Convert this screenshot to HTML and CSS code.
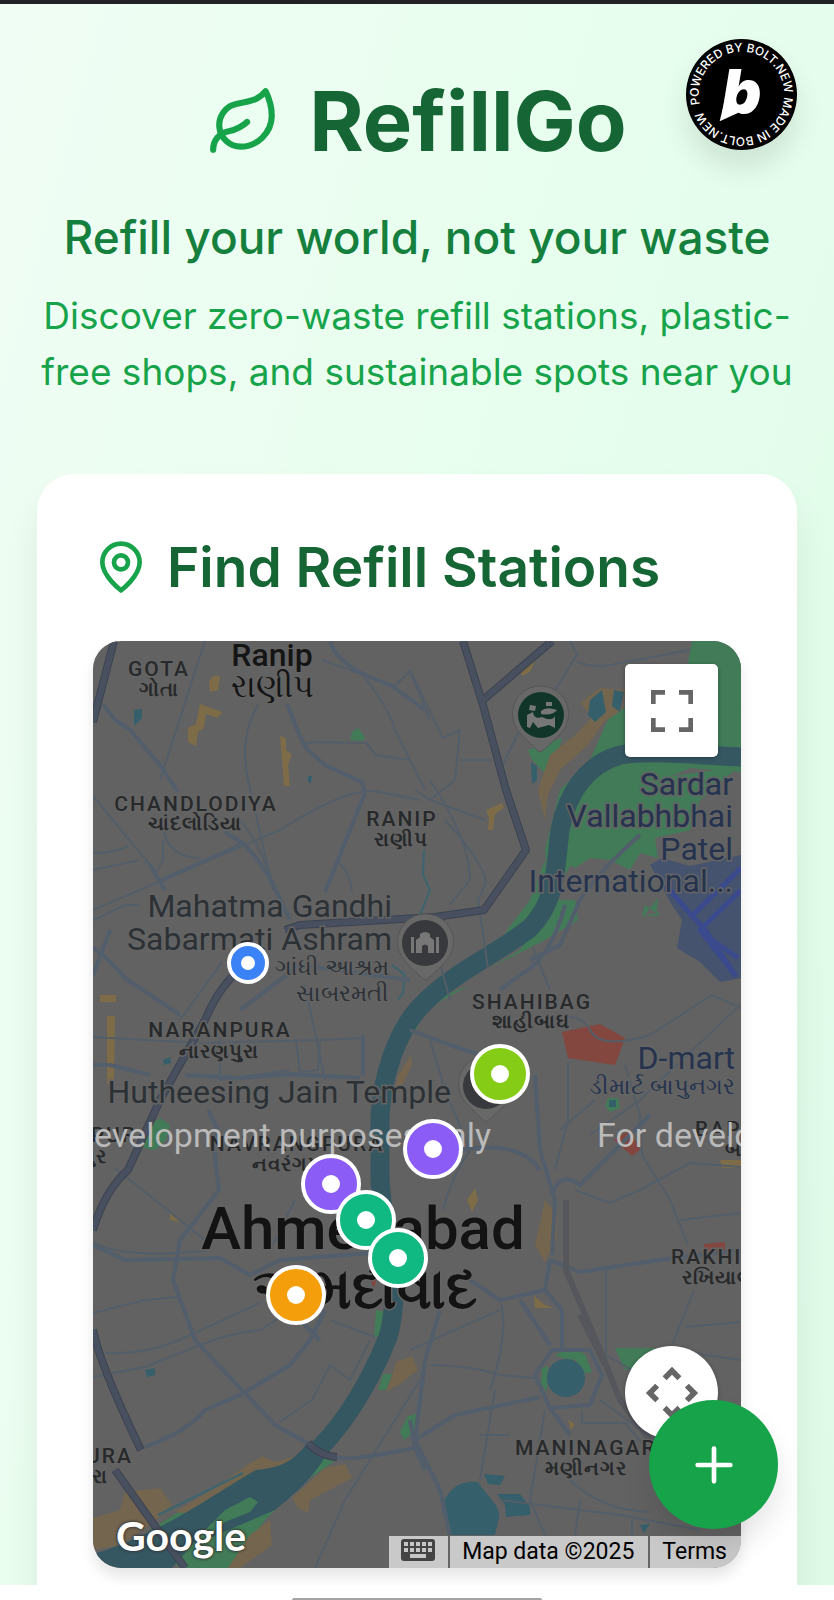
FILE: index.html
```
<!DOCTYPE html>
<html lang="en">
<head>
    <meta charset="UTF-8">
    <meta name="viewport" content="width=device-width, initial-scale=1.0">
    <title>RefillGo</title>
    <link rel="stylesheet" href="styles.css">
</head>
<body>

<div class="screen">
    <header class="header">
        <div class="brand">
            <svg class="brand-icon" viewBox="0 0 24 24" aria-hidden="true">
                <path d="M11 20A7 7 0 0 1 9.8 6.1C15.5 5 17 4.48 19 2c1 2 2 4.18 2 8 0 5.5-4.78 10-10 10Z"/>
                <path d="M2 21c0-3 1.85-5.36 5.08-6C9.5 14.52 12 13 13 12"/>
            </svg>
            <h1>RefillGo</h1>
        </div>
        <p class="tagline">Refill your world, not your waste</p>
        <p class="description">Discover zero-waste refill stations, plastic-free shops, and sustainable spots near you</p>
    </header>

    <main class="card">
        <div class="card-title">
            <svg class="card-icon" viewBox="0 0 24 24" aria-hidden="true">
                <path d="M20 10c0 6-8 12-8 12s-8-6-8-12a8 8 0 0 1 16 0Z"/>
                <circle cx="12" cy="10" r="3"/>
            </svg>
            <h2>Find Refill Stations</h2>
        </div>

        <div class="map">
            <svg class="map-canvas" viewBox="93 641 648 927" preserveAspectRatio="xMidYMid slice">
                <rect class="land" x="93" y="641" width="648" height="927"/>

                <!-- parks -->
                <g class="park">
                    <path d="M692 641H741V710L720 708 705 700 685 680Z"/>
                    <path d="M741 709V772L690 768 640 790 600 820 575 858 550 900 545 850 560 790 590 760 610 715 640 700Z"/>
                    <path d="M580 790L741 766 730 774 700 800 690 830 655 838 658 858 640 853 630 870 610 860 590 858 575 868 565 862Z"/>
                    <path d="M658 898L643 917 660 912 656 917ZM645 905L660 915 642 917Z"/>
                    <path d="M545 860L530 900 500 940 530 920 550 905ZM575 900L578 920 545 940 490 968 520 950 550 900Z"/>
                    <path d="M470 985L425 1010 415 1032 411 1026 425 1004Z"/>
                    <path d="M528 750L562 738 556 760 544 772 532 760Z"/>
                    <path d="M352 732L358 728 365 737 363 741 350 740Z"/>
                    <path d="M150 1125L160 1118 170 1125 166 1140 155 1150 143 1148Z"/>
                    <path d="M376 1310L385 1312 380 1335 374 1338Z"/>
                    <path d="M383 1374L392 1374 386 1390 378 1390Z"/>
                    <path d="M408 1416L416 1414 414 1432 404 1440 400 1432Z"/>
                    <path d="M615 1348L655 1348 645 1370 625 1370Z"/>
                    <path d="M555 1355L570 1348 585 1354 592 1372 582 1374 576 1360 562 1358ZM542 1368L548 1366 547 1392 541 1384Z"/>
                    <path d="M608 1098L618 1098 620 1108 610 1112 605 1106Z"/>
                    <path d="M150 1530L190 1505 240 1495 300 1470 322 1458 336 1460 300 1485 265 1520 230 1568H180L160 1550Z"/>
                </g>

                <!-- sandy and built up areas -->
                <g class="sand">
                    <path d="M580 703L600 688 625 690 622 710 604 722 588 745 560 770 548 795 545 820 538 790 550 755 575 735 592 717Z"/>
                    <path d="M93 1518L120 1510 125 1492 160 1488 172 1505 150 1525 120 1545 93 1550Z"/>
                    <path d="M247 1465L262 1456 275 1462 300 1455 280 1475 250 1485 200 1515 175 1512 215 1488Z"/>
                    <path d="M325 1468L345 1464 352 1478 310 1500 308 1513 298 1508 292 1498Z"/>
                    <path d="M270 1520L272 1545 240 1568H228L250 1535Z"/>
                    <path d="M396 1362L412 1356 418 1370 400 1384 386 1392 392 1376Z"/>
                    <path d="M545 1200L557 1215 556 1240 545 1262 535 1245Z"/>
                    <path d="M411 1055L398 1075 394 1095 400 1090 412 1065Z"/>
                </g>
                <g class="commercial">
                    <path d="M213 676L220 676 218 690 210 692 209 682Z"/>
                    <path d="M200 704L222 712 218 718 206 714 204 728 198 732 196 746 188 742 188 728 196 724Z"/>
                    <path d="M280 736L286 738 286 750 292 754 288 765 290 786 284 786 282 760Z"/>
                    <path d="M520 668L535 661 530 672 522 676Z"/>
                    <path d="M486 810L502 803 504 808 495 814 493 830 488 830 489 818Z"/>
                    <path d="M107 1016L115 1016 114 1084 107 1084ZM100 995H116V1002H100Z"/>
                    <path d="M534 1296L545 1305 553 1308 535 1308Z"/>
                    <path d="M475 1188L478 1200 472 1212 467 1200Z"/>
                    <path d="M720 1160H741V1168H722Z"/>
                    <path d="M170 1213L180 1222 170 1220ZM568 1420L575 1424 571 1430Z"/>
                </g>

                <path class="airport" d="M650 865L662 858 690 866 741 855V978L720 982 700 962 677 948 682 920 672 905Z"/>
                <path class="runway" d="M665 885L705 930 735 975 700 930 741 890M690 918L741 868M705 935L738 958"/>

                <!-- water -->
                <path class="river" d="M741 757C700 755 650 750 620 755C585 765 567 795 560 830C555 870 557 900 530 928C500 952 450 975 425 1002C395 1030 382 1080 380 1117V1180Q384 1230 394 1260Q396 1310 388 1337C365 1395 335 1435 312 1455"/>
                <path class="river-fill" d="M306 1445C290 1465 275 1468 256 1470C220 1490 160 1535 93 1554V1568H172L205 1530 225 1510 250 1497 258 1502 250 1512 225 1522 205 1540 275 1510C300 1490 315 1475 328 1452Z"/>
                <g class="lake">
                    <circle cx="566" cy="1378" r="19"/>
                    <path d="M442 1510C445 1490 460 1480 478 1482C490 1500 500 1505 499 1518L495 1535H450Z"/>
                    <path d="M484 1474L505 1476 500 1485 488 1484ZM497 1494L520 1494 530 1507 530 1515 506 1517 505 1505Z"/>
                    <path d="M134 710L142 709 142 718 134 726ZM308 776L312 776 311 783 308 782Z"/>
                    <path d="M590 700L602 690 606 712 595 722 588 715ZM614 690L624 692 620 712 612 706Z"/>
                    <path d="M531 762L537 766 537 780 532 784Z"/>
                    <path d="M163 1060L170 1057 171 1063 164 1065ZM145 1370L155 1368 155 1375 147 1377Z"/>
                    <path d="M640 1525L650 1524 644 1533ZM609 1100H616V1107H609Z"/>
                </g>
                <path class="stream" d="M424 850L423 875 430 890 420 915M392 965L405 975 403 993 398 1000M158 1515L243 1473"/>

                <!-- hospital / special zones -->
                <g class="zone">
                    <path d="M562 1032L600 1024 625 1038 615 1065 568 1058Z"/>
                    <path d="M614 1140L630 1130 640 1150 632 1156Z"/>
                    <path d="M704 1244L725 1242 725 1255H704Z"/>
                    <path d="M370 1262L378 1275 374 1288 368 1275Z"/>
                </g>

                <!-- streets -->
                <g class="street thin">
                    <path d="M205 641L160 780M258 705Q240 735 247 775L273 890M93 910L280 830Q350 785 380 792L420 800"/>
                    <path d="M93 796L150 865 166 890M163 830Q170 858 200 858M163 840V860L155 875M235 815Q260 840 275 890"/>
                    <path d="M322 660L395 686 410 671 430 720M365 678Q390 710 395 730L425 790M286 704Q300 740 305 745L310 742 366 743 376 755 410 760"/>
                    <path d="M337 862Q350 870 352 892M93 853Q115 853 128 846M93 870L140 860"/>
                    <path d="M415 790L430 800 455 780 460 730 443 738 410 670M430 780Q470 840 470 880L450 905M430 800L485 820M460 760H492M445 820Q490 870 485 885L478 900 488 968"/>
                    <path d="M570 641L577 655 555 690 520 730 500 770M577 662Q600 670 620 663L690 650"/>
                    <path d="M93 920L125 905 140 905M180 1020L222 962M93 1037L200 1043 320 1040 362 1038M320 1043L318 1070 300 1072 296 1040M220 1038V1080L290 1070M305 985L325 1080"/>
                    <path d="M115 1168L180 1220 205 1240M93 1243Q130 1260 210 1250M93 1313L145 1300 178 1297M105 1353Q150 1355 190 1335L260 1303M93 1377L145 1367 200 1345Q230 1333 260 1330L300 1305"/>
                    <path d="M280 1422L312 1400 330 1365 350 1380 370 1340M315 1568L345 1500 420 1380M330 1320L375 1337M295 1200L270 1250"/>
                    <path d="M545 1020Q580 1010 590 1030T650 1035L712 995 741 1008M740 1005L640 1100 590 1135M568 1062V1120L555 1170M625 1065L640 1115 642 1155 670 1200 688 1245M595 1100L560 1130"/>
                    <path d="M435 945L450 1000M533 948L550 990M430 1040L445 1090 470 1150Q450 1180 443 1210M741 1167L690 1163 640 1190 610 1203 575 1190M680 1220L741 1213"/>
                    <path d="M606 1270V1355L640 1375M694 1290L670 1350 741 1360M685 1327L741 1322M500 1300Q510 1330 490 1390M410 1350L500 1310M430 1365Q470 1365 500 1375L535 1378M495 1390L480 1480"/>
                    <path d="M480 1435H510M545 1410Q540 1440 530 1500L545 1535M582 1410V1423H625L690 1500M500 1500L620 1515 700 1530M570 1480Q600 1510 650 1512M580 1500L575 1535M632 1520V1535M600 1400L655 1440"/>
                </g>
                <g class="street">
                    <path d="M103 704L115 720 130 730 160 765 178 792M225 832L245 845Q268 870 278 895L290 920"/>
                    <path d="M330 641Q335 660 365 675L392 686 425 710M288 705Q300 740 308 750L325 765 362 782 365 793 338 860 325 892"/>
                    <path d="M162 880L240 845M150 865L165 890M93 948Q105 955 125 978L180 1015M93 975L110 930"/>
                    <path d="M93 1065H110L150 1075M185 1075L240 1078 290 1074 360 1078M363 1035V1075M240 1010L300 965 410 980M208 1110L218 1130 214 1150 219 1190 180 1240 173 1280 195 1340 240 1388 275 1425 320 1450"/>
                    <path d="M145 1447Q190 1430 205 1410L240 1395 290 1365 310 1340 325 1310M93 1245L125 1260 220 1258 250 1275 280 1260 410 1250M290 1310L320 1340"/>
                    <path d="M337 1457Q345 1462 415 1448L425 1470M415 1448L410 1420"/>
                    <path d="M565 905Q550 960 520 975L500 990M640 835Q600 870 580 900L560 945 530 960M410 1030L450 1045 490 1058M535 1075L540 1150 555 1200 552 1255M460 1150Q520 1140 540 1170M650 1115L580 1185Q560 1170 552 1195"/>
                    <path d="M550 1260L580 1272 660 1260 741 1250M470 1280L500 1300 545 1290 550 1260M545 1290L562 1310 562 1350M520 1300L550 1345"/>
                    <path d="M440 1310L425 1360 415 1440 440 1490 450 1535M415 1440L455 1415 540 1397M535 1375L552 1350 590 1350 602 1375 590 1405 550 1408ZM550 1408L570 1435"/>
                </g>
                <g class="rail">
                    <path d="M566 1200V1270L600 1350 620 1400 650 1440M580 1315L605 1365"/>
                </g>
                <g class="highway-edge">
                    <path d="M114 641L93 722M463 641L483 705 506 790 526 850 484 910 435 917 300 925 285 930M483 700L552 641M240 970Q220 985 205 1020L160 1100 128 1170Q105 1190 93 1230M93 1330Q100 1365 141 1450M115 1470L185 1568M308 1443Q320 1456 337 1457"/>
                </g>
                <g class="highway">
                    <path d="M114 641L93 722M463 641L483 705 506 790 526 850 484 910 435 917 300 925 285 930M483 700L552 641M240 970Q220 985 205 1020L160 1100 128 1170Q105 1190 93 1230M93 1330Q100 1365 141 1450M115 1470L185 1568M308 1443Q320 1456 337 1457"/>
                </g>

                <!-- places of interest -->
                <g class="poi">
                    <path class="poi-edge" d="M540 752Q536 750 520 733A28 28 0 1 1 561 733Q545 750 540 752Z"/>
                    <circle class="poi-green" cx="541" cy="715" r="23"/>
                    <path class="poi-glyph" d="M530 705L536 706 535 711 529 710ZM546 702H552V706H546ZM527 715L533 712Q534 720 542 717Q552 722 555 716L555 728 549 725 538 728 533 722 530 728 527 727ZM541 711Q546 706 557 710Q552 716 541 714Z"/>
                </g>
                <g class="poi">
                    <path class="poi-edge" d="M425 980Q421 978 405 961A28 28 0 1 1 446 961Q430 978 425 980Z"/>
                    <circle class="poi-grey" cx="425" cy="943" r="23"/>
                    <path class="poi-glyph" d="M411 937H414V953H411ZM416 953V940L420 937V934Q425 930 430 934V937L434 940V953H428V946Q425 943 422 946V953ZM436 937H439V953H436Z"/>
                </g>
                <g class="poi">
                    <path class="poi-edge" d="M486 1122Q482 1120 466 1103A28 28 0 1 1 507 1103Q490 1120 486 1122Z"/>
                    <circle class="poi-grey" cx="486" cy="1086" r="23"/>
                </g>

                <!-- labels -->
                <g class="label city">
                    <text x="272" y="666" text-anchor="middle">Ranip</text>
                    <text class="local" x="272" y="697" text-anchor="middle">રાણીપ</text>
                </g>
                <g class="label district">
                    <text x="159" y="676" text-anchor="middle">GOTA</text>
                    <text x="196" y="811" text-anchor="middle">CHANDLODIYA</text>
                    <text x="402" y="826" text-anchor="middle">RANIP</text>
                    <text x="220" y="1037" text-anchor="middle">NARANPURA</text>
                    <text x="297" y="1151" text-anchor="middle">NAVRANGPURA</text>
                    <text x="532" y="1009" text-anchor="middle">SHAHIBAG</text>
                    <text x="515" y="1455">MANINAGAR</text>
                    <text x="671" y="1264">RAKHIAL</text>
                    <text x="695" y="1136">BAPUNAGAR</text>
                    <text x="133" y="1463" text-anchor="end">VEJALPURA</text>
                    <text x="137" y="1142" text-anchor="end">VASTRAPUR</text>
                </g>
                <g class="label district-local">
                    <text x="159" y="696" text-anchor="middle">ગોતા</text>
                    <text x="195" y="830" text-anchor="middle">ચાંદલોડિયા</text>
                    <text x="401" y="846" text-anchor="middle">રાણીપ</text>
                    <text x="219" y="1058" text-anchor="middle">નારણપુરા</text>
                    <text x="252" y="1171">નવરંગપુરા</text>
                    <text x="531" y="1028" text-anchor="middle">શાહીબાઘ</text>
                    <text x="586" y="1475" text-anchor="middle">મણીનગર</text>
                    <text x="682" y="1284">રખિયાલ</text>
                    <text x="725" y="1156">બાપુનગર</text>
                    <text x="108" y="1483" text-anchor="end">રા</text>
                    <text x="107" y="1163" text-anchor="end">પુર</text>
                </g>
                <g class="label place" text-anchor="end">
                    <text x="392" y="917">Mahatma Gandhi</text>
                    <text x="392" y="950">Sabarmati Ashram</text>
                    <text x="451" y="1103">Hutheesing Jain Temple</text>
                    <text class="place-local" x="389" y="975">ગાંધી આશ્રમ</text>
                    <text class="place-local" x="389" y="1001">સાબરમતી</text>
                </g>
                <g class="label place transit" text-anchor="end">
                    <text x="733" y="795">Sardar</text>
                    <text x="733" y="827">Vallabhbhai</text>
                    <text x="733" y="860">Patel</text>
                    <text x="733" y="892">International...</text>
                    <text x="735" y="1069">D-mart</text>
                    <text class="place-local" x="735" y="1094">ડીમાર્ટ બાપુનગર</text>
                </g>
                <g class="label capital">
                    <text x="363" y="1249" text-anchor="middle">Ahmedabad</text>
                    <text class="local" x="365" y="1308" text-anchor="middle">અમદાવાદ</text>
                </g>
                <g class="watermark">
                    <text x="491" y="1147" text-anchor="end">For development purposes only</text>
                    <text x="597" y="1147">For development purposes only</text>
                </g>
            </svg>

            <button class="pin pin-user" aria-label="Your location"></button>
            <button class="pin pin-lime" aria-label="Refill station"></button>
            <button class="pin pin-purple pin-east" aria-label="Refill station"></button>
            <button class="pin pin-purple pin-west" aria-label="Refill station"></button>
            <button class="pin pin-green pin-upper" aria-label="Refill station"></button>
            <button class="pin pin-green pin-lower" aria-label="Refill station"></button>
            <button class="pin pin-orange" aria-label="Refill station"></button>

            <button class="map-control fullscreen" aria-label="Toggle fullscreen view">
                <svg viewBox="0 0 18 18"><path d="M0 0v6h2V2h4V0H0zm16 0h-4v2h4v4h2V0h-2zm0 16h-4v2h6v-6h-2v4zM2 12H0v6h6v-2H2v-4z"/></svg>
            </button>
            <button class="map-control camera" aria-label="Map camera controls">
                <svg viewBox="0 0 54 54"><path d="M19 11L27 3 35 11M19 43L27 51 35 43M11 19L3 27 11 35M43 19L51 27 43 35"/></svg>
            </button>

            <a class="google" href="#">Google</a>
            <div class="attribution">
                <button aria-label="Keyboard shortcuts">
                    <svg viewBox="0 0 34 22">
                        <rect width="34" height="22" rx="3"/>
                        <path d="M3 5H31M3 11H31" stroke-dasharray="4 2"/>
                        <path d="M9 17H25"/>
                    </svg>
                </button>
                <span>Map data ©2025</span>
                <a href="#">Terms</a>
            </div>
        </div>
    </main>

    <a class="badge" href="#" aria-label="Powered by Bolt.new">
        <svg viewBox="0 0 112 112">
            <defs><path id="ring" d="M14 66A43 43 0 0 1 98 46A43 43 0 0 1 14 66"/></defs>
            <circle cx="56" cy="56" r="56"/>
            <text class="ring-text"><textPath href="#ring">POWERED BY BOLT.NEW MADE IN BOLT.NEW</textPath></text>
            <text class="bolt" x="36" y="76">b</text>
            <path class="bolt-tail" d="M40 58L34 83 54 74 50 62Z"/>
        </svg>
    </a>

    <button class="fab" aria-label="Add station">
        <svg viewBox="0 0 24 24"><path d="M5 12h14M12 5v14"/></svg>
    </button>
</div>

<div class="gesture-bar"><span></span></div>

</body>
</html>
```
FILE: styles.css
```
* {
    box-sizing: border-box;
}
body {
    margin: 0;
    height: 100vh;
    display: flex;
    flex-direction: column;
    font-family: Inter, sans-serif;
    background: #fff;
    border-top: 4px solid #222226;
}
h1, h2, p {
    margin: 0;
}
button {
    border: none;
    padding: 0;
    cursor: pointer;
}
a {
    color: inherit;
    text-decoration: none;
}
svg {
    display: block;
}
.screen {
    position: relative;
    flex: 1;
    min-height: 0;
    overflow: hidden;
    padding: 71px 37px 0;
    display: flex;
    flex-direction: column;
    background: linear-gradient(105deg, #f0fdf4, #e7feee 50%, #dffbe8);
}

/* Header */
.header {
    text-align: center;
    margin-bottom: 74px;
}
.brand {
    display: flex;
    align-items: center;
    justify-content: center;
    gap: 28px;
    margin-bottom: 37px;
}
.brand-icon {
    width: 74px;
    height: 74px;
}
.brand-icon, .card-icon {
    fill: none;
    stroke: #16a34a;
    stroke-width: 2;
    stroke-linecap: round;
    stroke-linejoin: round;
}
h1 {
    font-size: 83px;
    line-height: 93px;
    font-weight: 700;
    color: #166534;
}
.tagline {
    font-size: 46px;
    line-height: 65px;
    font-weight: 500;
    color: #15803d;
    margin-bottom: 18px;
}
.description {
    font-size: 37px;
    line-height: 56px;
    color: #16a34a;
}

/* Map card */
.card {
    flex: 1 0 auto;
    background: #fff;
    border-radius: 37px 37px 0 0;
    padding: 56px;
    box-shadow: 0 24px 36px rgba(0, 0, 0, 0.07);
}
.card-title {
    display: flex;
    align-items: center;
    gap: 18px;
    margin-bottom: 37px;
}
.card-icon {
    width: 56px;
    height: 56px;
}
h2 {
    font-size: 55px;
    line-height: 74px;
    font-weight: 600;
    color: #166534;
}
.map {
    position: relative;
    height: 927px;
    border-radius: 28px;
    overflow: hidden;
    box-shadow: 0 9px 14px rgba(0, 0, 0, 0.1);
    font-family: Roboto, sans-serif;
}
.map-canvas {
    width: 100%;
    height: 100%;
}
.land { fill: #626262; }
.park { fill: #417b58; }
.sand { fill: #74654f; }
.commercial { fill: #7d6c47; }
.airport { fill: #46536f; }
.zone { fill: #84473f; }
.lake { fill: #355f6b; }
.river-fill { fill: #355761; }
.river, .runway, .stream, .street, .rail, .highway, .highway-edge {
    fill: none;
    stroke-linejoin: round;
}
.river {
    stroke: #355761;
    stroke-width: 19;
}
.runway {
    stroke: #3a4a8c;
    stroke-width: 5;
}
.stream {
    stroke: #3c6570;
    stroke-width: 2;
}
.street {
    stroke: #525e6b;
    stroke-width: 4;
}
.street.thin {
    stroke: #535e69;
    stroke-width: 2;
}
.rail {
    stroke: #55575d;
    stroke-width: 6;
}
.highway-edge {
    stroke: #3c4350;
    stroke-width: 8;
}
.highway {
    stroke: #484f5f;
    stroke-width: 6;
}
.poi-edge {
    fill: #686868;
    stroke: #565656;
    stroke-width: 1;
}
.poi-green { fill: #12352a; }
.poi-grey { fill: #38393d; }
.poi-glyph { fill: #777; }

/* Map labels */
.label {
    fill: #27292b;
    stroke: #646464;
    stroke-width: 3;
    paint-order: stroke;
}
.district {
    font-size: 21px;
    font-weight: 500;
    letter-spacing: 2px;
}
.district-local {
    font-size: 20px;
    font-weight: 700;
    letter-spacing: 1px;
}
.city {
    font-size: 32px;
    font-weight: 500;
    fill: #151515;
}
.place {
    font-size: 32px;
    fill: #2c3136;
}
.transit {
    fill: #26334f;
}
.place-local {
    font-size: 23px;
}
.capital {
    font-size: 60px;
    font-weight: 500;
    fill: #131313;
}
.capital .local {
    font-size: 56px;
    font-weight: 700;
}
.watermark {
    font-size: 34px;
    fill: #bababa;
}

/* Pins */
.pin {
    position: absolute;
    width: 60px;
    height: 60px;
    border: 4px solid #fff;
    border-radius: 50%;
    transform: translate(-50%, -50%);
}
.pin::after {
    content: "";
    position: absolute;
    inset: 17px;
    border-radius: 50%;
    background: #fff;
}
.pin-user {
    width: 42px;
    height: 42px;
    left: 155px;
    top: 322px;
    background: #3b82f6;
}
.pin-user::after {
    inset: 10px;
}
.pin-lime {
    left: 407px;
    top: 433px;
    background: #84cc16;
}
.pin-purple {
    background: #8b5cf6;
}
.pin-east {
    left: 340px;
    top: 508px;
}
.pin-west {
    left: 238px;
    top: 543px;
}
.pin-green {
    background: #10b981;
}
.pin-upper {
    left: 273px;
    top: 579px;
}
.pin-lower {
    left: 305px;
    top: 617px;
}
.pin-orange {
    left: 203px;
    top: 654px;
    background: #f59e0b;
}

/* Map controls */
.map-control {
    position: absolute;
    right: 23px;
    width: 93px;
    height: 93px;
    display: flex;
    align-items: center;
    justify-content: center;
    background: #fff;
    box-shadow: 0 1px 4px rgba(0, 0, 0, 0.3);
}
.fullscreen {
    top: 23px;
    border-radius: 5px;
}
.fullscreen svg {
    width: 42px;
    height: 42px;
    fill: #666;
}
.camera {
    bottom: 129px;
    border-radius: 50%;
}
.camera svg {
    width: 50px;
    height: 50px;
    fill: none;
    stroke: #666;
    stroke-width: 6;
    overflow: visible;
}
.google {
    position: absolute;
    left: 23px;
    bottom: 4px;
    font-family: Lato, sans-serif;
    font-size: 41px;
    line-height: 56px;
    font-weight: 700;
    color: #fff;
    text-shadow: 0 0 3px #333, 0 0 3px #333;
}
.attribution {
    position: absolute;
    right: 0;
    bottom: 0;
    height: 32px;
    display: flex;
    font-size: 23px;
    line-height: 32px;
    color: #000;
    background: rgba(245, 245, 245, 0.7);
}
.attribution button {
    width: 59px;
    background: none;
}
.attribution svg {
    width: 34px;
    height: 22px;
    margin: -4px auto 0 12px;
    fill: #444;
    stroke: #c6c6c6;
    stroke-width: 4;
}
.attribution rect {
    stroke: none;
}
.attribution span, .attribution a {
    border-left: 2px solid #666;
    padding: 0 14px 0 12px;
}

/* Floating items */
.badge {
    position: absolute;
    top: 35px;
    right: 37px;
    width: 111px;
    height: 111px;
    border-radius: 50%;
    box-shadow: 0 18px 28px rgba(0, 0, 0, 0.1);
}
.ring-text {
    font-size: 12px;
    font-weight: 500;
    fill: #fff;
}
.bolt {
    font-size: 62px;
    font-weight: 900;
    font-style: italic;
    fill: #fff;
}
.bolt-tail {
    fill: #fff;
}
.fab {
    position: absolute;
    right: 56px;
    bottom: 56px;
    width: 129px;
    height: 129px;
    display: flex;
    align-items: center;
    justify-content: center;
    border-radius: 50%;
    background: #16a34a;
    box-shadow: 0 18px 28px rgba(0, 0, 0, 0.1);
}
.fab svg {
    width: 56px;
    height: 56px;
    fill: none;
    stroke: #fff;
    stroke-width: 2;
    stroke-linecap: round;
}
.gesture-bar {
    height: 15px;
    display: flex;
    align-items: flex-end;
    justify-content: center;
}
.gesture-bar span {
    width: 30%;
    height: 2px;
    border-radius: 2px 2px 0 0;
    background: #a3a3a3;
}
```
